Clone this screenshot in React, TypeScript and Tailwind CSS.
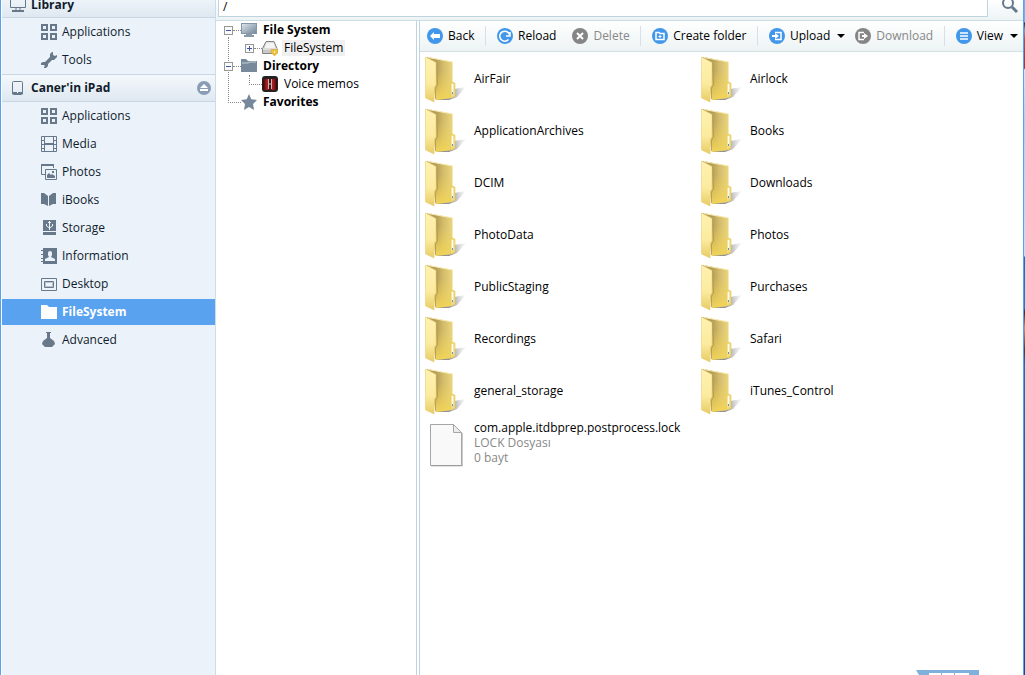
import type { ReactNode } from 'react';

const SLATE = '#66788a';

const AppsIcon = () => (
  <svg width="16" height="16" viewBox="0 0 16 16" fill="none" stroke={SLATE} strokeWidth="2">
    <path d="M1 1h5v5H1zM10 1h5v5h-5zM1 10h5v5H1zM10 10h5v5h-5z" />
  </svg>
);

const ToolsIcon = () => (
  <svg width="16" height="16" viewBox="0 0 16 16" fill={SLATE}>
    <path d="M11 0h1v3l2 1 2-1v2l-3 3h-2l-4 4v2l-2 2H3v-1l1-1-1-1H0v-2l2-1h2l5-5V2z" />
  </svg>
);

const MediaIcon = () => (
  <svg width="16" height="16" viewBox="0 0 16 16" fill="none" stroke={SLATE}>
    <path d="M.5.5h15v15H.5zM3.5 0v16M12.5 0v16M0 4.5h4M0 8.5h4M0 12.5h4M12 4.5h4M12 8.5h4M12 12.5h4" />
    <path d="M4 8h8" strokeWidth="2" />
  </svg>
);

const PhotosIcon = () => (
  <svg width="16" height="16" viewBox="0 0 16 16" fill="none" stroke={SLATE}>
    <path d="M4 10.5H.5V.5h12V4" />
    <path d="M0 1h13" strokeWidth="2" />
    <path d="M4.5 5.5h11v10h-11z" />
    <path d="M6 14v-3l2-2 2 2 1-1 3 2v2zM11 7h2v2h-2z" fill={SLATE} stroke="none" />
  </svg>
);

const BooksIcon = () => (
  <svg width="16" height="16" viewBox="0 0 16 16" fill={SLATE}>
    <path d="M0 1l3 0 4 3v10l-4-2H0zM15 1l-3 0-4 3v10l4-2h3z" />
  </svg>
);

const StorageIcon = () => (
  <svg width="16" height="16" viewBox="0 0 16 16">
    <path d="M2 0h13v11H2zM2 12h13v3H2z" fill={SLATE} />
    <path d="M8.5 1v9M5.5 4v2l3 2 3-2V4M7 2.5h3" fill="none" stroke="#ebf2fa" />
  </svg>
);

const InfoIcon = () => (
  <svg width="16" height="16" viewBox="0 0 16 16">
    <path d="M2 0h14v16H2zM0 2h3v1H0zM0 6h3v1H0zM0 10h3v1H0zM0 13h3v1H0z" fill={SLATE} />
    <path d="M9 3a2 2 0 0 1 2 2v2l-1 2 4 2v2H4v-2l4-2-1-2V5a2 2 0 0 1 2-2z" fill="#ebf2fa" />
  </svg>
);

const DesktopIcon = () => (
  <svg width="16" height="16" viewBox="0 0 16 16" fill="none" stroke={SLATE}>
    <path d="M.5 2.5h15v12H.5z" />
    <path d="M3.5 5.5h9v6h-9z" />
    <path d="M4.5 6.5h7v4h-7z" strokeOpacity=".4" />
  </svg>
);

const FolderIcon = () => (
  <svg width="16" height="16" viewBox="0 0 16 16" fill="#fff">
    <path d="M0 1h6l2 2h8v12H0z" />
  </svg>
);

const FlaskIcon = () => (
  <svg width="16" height="16" viewBox="0 0 16 16" fill={SLATE}>
    <path d="M5 0h5v1H9v5l4 3 1 3-3 3H4l-3-3 1-3 4-3V1H5z" />
  </svg>
);

const LibraryIcon = () => (
  <svg width="16" height="16" viewBox="0 0 16 16" fill="none" stroke={SLATE}>
    <path d="M.5 1.5h15v9H.5z" />
    <path d="M6 11v3M10 11v3" />
    <path d="M2 14h12" strokeWidth="2" />
  </svg>
);

const TabletIcon = () => (
  <svg width="16" height="16" viewBox="0 0 16 16">
    <rect x="2.5" y="1.5" width="10" height="13" rx="1" fill="none" stroke={SLATE} />
    <path d="M2 12h11v2H2z" fill={SLATE} />
    <path d="M7 12h1v1H7z" fill="#fff" />
  </svg>
);

const MonitorIcon = () => (
  <svg width="16" height="16" viewBox="0 0 16 16">
    <defs>
      <linearGradient id="screen" x2="1" y2="1">
        <stop stopColor="#dbe2e8" />
        <stop offset="1" stopColor="#75899e" />
      </linearGradient>
    </defs>
    <path d="M0 1h16v11H0z" fill="#8496a8" />
    <path d="M1 2h14v9H1z" fill="url(#screen)" />
    <path d="M5 12h6v1h2v2H3v-2h2z" fill="#8999a8" />
  </svg>
);

const DriveIcon = () => (
  <svg width="16" height="16" viewBox="0 0 16 16">
    <path d="M4 1.5h8l3 7v5H.5v-5z" fill="#c9c9c9" stroke="#858585" />
    <path d="M4.5 2.5h7l2 5.5h-11z" fill="#f4f4f4" />
    <path d="M1 9h14" stroke="#f0f0f0" />
    <path d="M9 9.5h7v3L12.5 16 9 12.5z" fill="#edc33e" stroke="#c99728" strokeWidth=".5" />
    <path d="M12 11h1v2h-1z" fill="#fff5c0" />
  </svg>
);

const DirectoryIcon = () => (
  <svg width="16" height="16" viewBox="0 0 16 16">
    <path d="M0 1h5l2 2h9v11H0z" fill="#77899b" />
    <path d="M1 5h6l2-1h6" fill="none" stroke="#c7d0d9" />
  </svg>
);

const MemoIcon = () => (
  <svg width="16" height="16" viewBox="0 0 16 16">
    <defs>
      <linearGradient id="memo">
        <stop stopColor="#2c0909" />
        <stop offset=".3" stopColor="#b82020" />
        <stop offset=".5" stopColor="#340909" />
        <stop offset=".7" stopColor="#b82020" />
        <stop offset="1" stopColor="#220909" />
      </linearGradient>
    </defs>
    <rect width="16" height="16" rx="3" fill="#262020" />
    <rect x="1" y="3" width="14" height="11" rx="2" fill="url(#memo)" />
    <path d="M6.5 3v10M9.5 3v10M6 8h4" stroke="#c9b5b5" />
  </svg>
);

const StarIcon = () => (
  <svg width="16" height="16" viewBox="0 0 16 16" fill="#75879a">
    <path d="M8 0l2.300 5.200L16 6l-4 4 1 6-5-3-5 3 1-6-4-4 5.700-.8z" />
  </svg>
);

const BigFolder = () => (
  <svg width="44" height="48" viewBox="0 0 44 48" className="shrink-0">
    <defs>
      <linearGradient id="back" x1=".3" x2="1">
        <stop stopColor="#b39a55" />
        <stop offset=".4" stopColor="#d3bb6a" />
        <stop offset="1" stopColor="#f0dc88" />
      </linearGradient>
      <linearGradient id="glow" x2="0" y2="1">
        <stop offset=".3" stopColor="#f0d45a" stopOpacity="0" />
        <stop offset="1" stopColor="#f0d45a" />
      </linearGradient>
      <linearGradient id="front" x2="0" y2="1">
        <stop stopColor="#fff2b0" />
        <stop offset=".6" stopColor="#fbeb9f" />
        <stop offset="1" stopColor="#e8cb62" />
      </linearGradient>
      <linearGradient id="shade" x1=".5" x2="1">
        <stop stopColor="#777" stopOpacity=".8" />
        <stop offset="1" stopColor="#bbb" stopOpacity=".05" />
      </linearGradient>
    </defs>
    <path d="M12 45l13 0 8-3 9-10-12 2z" fill="url(#shade)" />
    <path d="M3 2l26 5v21l2 1v12l-3 2-16 2z" fill="url(#back)" />
    <path d="M3 2l26 5v21l2 1v12l-3 2-16 2z" fill="url(#glow)" />
    <path d="M4 2.5L28.5 7v21" fill="none" stroke="#f8ebae" />
    <path d="M12.5 8l1 22-2 3v11" fill="none" stroke="#a58b42" strokeOpacity=".6" />
    <path d="M1.5 2L12 7.500V30l-1.500 2L10 47l-8.500-4z" fill="url(#front)" stroke="#e6cf7e" strokeWidth=".6" />
    <path d="M26.500 29l1.500-2 3 1v13l-4.500 2z" fill="#f3db75" stroke="#e0c765" strokeWidth=".6" />
    <path d="M28.500 29v10" stroke="#fff" strokeWidth="1.500" />
    <path d="M28 37h1v2h-1z" fill="#4e9ad4" />
  </svg>
);

const BigFile = () => (
  <svg width="44" height="48" viewBox="0 0 44 48" className="shrink-0">
    <path d="M6.5 5.5h23l8 8v33h-31z" fill="#f9f9f9" stroke="#a6a6a6" />
    <path d="M29.5 5.5v8h8z" fill="#ececec" stroke="#a6a6a6" />
    <path d="M38.5 14v33H7" fill="none" stroke="#777" strokeOpacity=".4" />
  </svg>
);

const Badge = ({ off, children }: { off?: boolean; children: ReactNode }) => (
  <svg width="16" height="16" viewBox="0 0 16 16" fill="none" stroke="#fff" strokeWidth="2" className="shrink-0">
    <circle cx="8" cy="8" r="8" fill={off ? '#858585' : '#4397ea'} stroke="none" />
    {children}
  </svg>
);

const libraryItems = [
  { label: 'Applications', icon: <AppsIcon /> },
  { label: 'Tools', icon: <ToolsIcon /> },
];

const deviceItems = [
  { label: 'Applications', icon: <AppsIcon /> },
  { label: 'Media', icon: <MediaIcon /> },
  { label: 'Photos', icon: <PhotosIcon /> },
  { label: 'iBooks', icon: <BooksIcon /> },
  { label: 'Storage', icon: <StorageIcon /> },
  { label: 'Information', icon: <InfoIcon /> },
  { label: 'Desktop', icon: <DesktopIcon /> },
  { label: 'FileSystem', icon: <FolderIcon />, active: true },
  { label: 'Advanced', icon: <FlaskIcon /> },
];

const folders = [
  'AirFair', 'Airlock',
  'ApplicationArchives', 'Books',
  'DCIM', 'Downloads',
  'PhotoData', 'Photos',
  'PublicStaging', 'Purchases',
  'Recordings', 'Safari',
  'general_storage', 'iTunes_Control',
];

interface NavItemProps {
  label: string;
  icon: ReactNode;
  active?: boolean;
}

function NavItem({ label, icon, active }: NavItemProps) {
  return (
    <li className="py-px">
      <a
        href="#"
        className={`flex h-[26px] items-center gap-[5px] pl-[39px] ${
          active ? 'bg-[#58a2ef] font-bold text-white' : 'text-[#101c2b]'
        }`}
      >
        {icon}
        {label}
      </a>
    </li>
  );
}

interface ToolButtonProps {
  label: string;
  icon: ReactNode;
  disabled?: boolean;
  menu?: boolean;
}

function ToolButton({ label, icon, disabled, menu }: ToolButtonProps) {
  return (
    <button
      type="button"
      disabled={disabled}
      className="flex items-center gap-[5px] whitespace-nowrap disabled:text-[#888]"
    >
      {icon}
      {label}
      {menu && (
        <svg width="8" height="4" viewBox="0 0 8 4" className="ml-0.5">
          <path d="M0 0h8L4 4z" />
        </svg>
      )}
    </button>
  );
}

const Divider = () => <span className="h-5 w-px bg-[#d3e2ea]" />;

function Expander({ open }: { open: boolean }) {
  return (
    <button type="button" aria-label={open ? 'Collapse' : 'Expand'} className="shrink-0">
      <svg width="9" height="9" viewBox="0 0 9 9" fill="none">
        <rect x=".5" y=".5" width="8" height="8" fill="#fafafa" stroke="#979797" />
        <path d={open ? 'M2 4.5h5' : 'M2 4.5h5M4.5 2v5'} stroke="#3c57a5" />
      </svg>
    </button>
  );
}

const Dots = () => <span className="w-2 border-t border-dotted border-[#888]" />;

export default function App() {
  return (
    <div className="flex h-screen overflow-hidden bg-white font-['Open_Sans',sans-serif] text-xs text-black">
      <aside className="w-[216px] shrink-0 border-r border-l border-r-[#cbdde6] border-l-[#58a2ef] bg-[#ebf2fa]">
        <div className="h-full border-l border-white">
          <h2 className="flex h-[18px] items-end gap-[5px] border-b border-[#c8d7e2] bg-linear-to-b from-[#edf3f9] to-[#dfe8f1] pb-1 pl-2 font-bold text-[#101c2b]">
            <LibraryIcon />
            <span>Library</span>
          </h2>
          <ul>
            {libraryItems.map((item) => <NavItem key={item.label} {...item} />)}
          </ul>
          <h2 className="flex h-7 items-center gap-[5px] border-t border-b border-[#c8d7e2] bg-linear-to-b from-[#f4f8fc] to-[#dfe8f1] pr-1 pl-2 font-bold text-[#101c2b]">
            <TabletIcon />
            <span className="flex-1">Caner&apos;in iPad</span>
            <button type="button" aria-label="Eject">
              <svg width="14" height="14" viewBox="0 0 14 14">
                <circle cx="7" cy="7" r="7" fill="#8b9db6" />
                <path d="M7 3l4 4H3zM3 8h8v2H3z" fill="#fff" />
              </svg>
            </button>
          </h2>
          <ul>
            {deviceItems.map((item) => <NavItem key={item.label} {...item} />)}
          </ul>
        </div>
      </aside>

      <div className="flex min-w-0 flex-1 flex-col">
        <div className="flex h-5 shrink-0 items-start bg-linear-to-b from-white to-[#edf3f4] pl-0.5">
          <input
            aria-label="Path"
            defaultValue="/"
            className="h-[17px] min-w-0 flex-1 border border-t-0 border-[#bfd4df] bg-white px-1 pb-1 outline-none"
          />
          <button type="button" aria-label="Search" className="flex w-[35px] justify-end pr-1">
            <svg width="18" height="14" viewBox="0 0 18 14" fill="none" stroke="#66788a">
              <circle cx="7" cy="3" r="5" strokeWidth="2" />
              <path d="M11 7l5 5" strokeWidth="3" />
            </svg>
          </button>
        </div>

        <div className="flex min-h-0 flex-1 border-t border-[#cbdde6]">
          <nav className="w-[201px] shrink-0 border-r border-[#bfd4df] pl-2">
            <ul className="relative">
              <li className="absolute top-4 left-1 h-[66px] border-l border-dotted border-[#888]" />
              <li className="relative flex h-[18px] items-center">
                <Expander open /><Dots /><MonitorIcon />
                <span className="ml-1.5 font-bold">File System</span>
              </li>
              <li className="flex h-[18px] items-center pl-[21px]">
                <Expander open={false} /><Dots /><DriveIcon />
                <span className="ml-1 bg-[#f0f0f0] px-0.5">FileSystem</span>
              </li>
              <li className="relative flex h-[18px] items-center">
                <Expander open /><Dots /><DirectoryIcon />
                <span className="ml-1.5 font-bold">Directory</span>
              </li>
              <li className="flex h-[18px] items-center pl-[25px]">
                <span className="mb-2 h-2.5 w-[13px] border-b border-l border-dotted border-[#888]" /><MemoIcon />
                <span className="ml-1.5">Voice memos</span>
              </li>
              <li className="flex h-[18px] items-center pl-1">
                <span className="w-[13px] border-t border-dotted border-[#888]" /><StarIcon />
                <span className="ml-1.5 font-bold">Favorites</span>
              </li>
            </ul>
          </nav>

          <main className="relative ml-0.5 min-w-0 flex-1 border-l border-[#bfd4df]">
            <div className="flex h-[31px] items-center justify-between border-b border-[#d3e0e4] bg-linear-to-b from-white to-[#edf3f4] pr-[5px] pl-[7px]">
              <ToolButton
                label="Back"
                icon={<Badge><path d="M3 8l4-4v2h6v4H7v2z" fill="#fff" stroke="none" /></Badge>}
              />
              <Divider />
              <div className="flex gap-4">
                <ToolButton
                  label="Reload"
                  icon={<Badge><path d="M11.5 11.5a5 5 0 1 1 1-5M13 4v4H9" strokeWidth="1.5" /></Badge>}
                />
                <ToolButton label="Delete" disabled icon={<Badge off><path d="M5 5l6 6M11 5l-6 6" /></Badge>} />
              </div>
              <Divider />
              <ToolButton
                label="Create folder"
                icon={(
                  <Badge>
                    <path d="M4 4.500h3l1 1h4v6H4z" strokeWidth="1.5" />
                    <path d="M8 7v3M6.5 8.5h3" strokeWidth="1" />
                  </Badge>
                )}
              />
              <Divider />
              <div className="flex gap-2.5">
                <ToolButton
                  label="Upload"
                  menu
                  icon={(
                    <Badge>
                      <path d="M6 4.5h6v7H6" strokeWidth="1.5" />
                      <path d="M3 7h3V5l4 3-4 3V9H3z" fill="#fff" stroke="none" />
                    </Badge>
                  )}
                />
                <ToolButton
                  label="Download"
                  disabled
                  icon={(
                    <Badge off>
                      <path d="M9 4.5H4v7h5" strokeWidth="1.5" />
                      <path d="M7 7h2V5l4 3-4 3V9H7z" fill="#fff" stroke="none" />
                    </Badge>
                  )}
                />
              </div>
              <Divider />
              <ToolButton label="View" menu icon={<Badge><path d="M4 5h8M4 8h8M4 11h8" strokeWidth="1.5" /></Badge>} />
            </div>
            <ul className="grid grid-cols-[276px_276px] pt-px pl-1">
              {folders.map((name) => (
                <li key={name} className="flex h-[52px] items-center gap-1.5">
                  <BigFolder />
                  {name}
                </li>
              ))}
              <li className="flex h-[52px] items-center gap-1.5 leading-[15px]">
                <BigFile />
                <div className="pb-0.5">
                  <p>com.apple.itdbprep.postprocess.lock</p>
                  <p className="text-[#888]">LOCK Dosyası</p>
                  <p className="text-[#888]">0 bayt</p>
                </div>
              </li>
            </ul>
            {/* top edge of the floating widget */}
            <svg width="64" height="5" viewBox="0 0 64 5" className="absolute right-[43px] bottom-0">
              <path d="M0 0h63v5H3z" fill="#7fb1dc" />
              <path d="M13 3h12v2H13zM26 3h12v2H26zM39 3h14v2H39z" fill="#fff" />
            </svg>
          </main>
        </div>
      </div>
      <div className="w-px shrink-0 bg-[#58a2ef]" />
      {/* sliver of desktop behind the window */}
      <div className="w-px shrink-0 bg-[linear-gradient(#6fb0ee_0px,#6fb0ee_22px,#1c2b40_23px,#8a9cac_30px,#b04a48_40px,#a03434_68px,#d6e6f5_70px,#a9d2f8_120px,#c4e0fa_256px,#1c6cb4_257px,#2a78c0_308px,#3a2c28_312px,#c98e6a_328px,#4a3a38_350px,#2c68a8_365px,#0f4a8c_100%)]" />
    </div>
  );
}
